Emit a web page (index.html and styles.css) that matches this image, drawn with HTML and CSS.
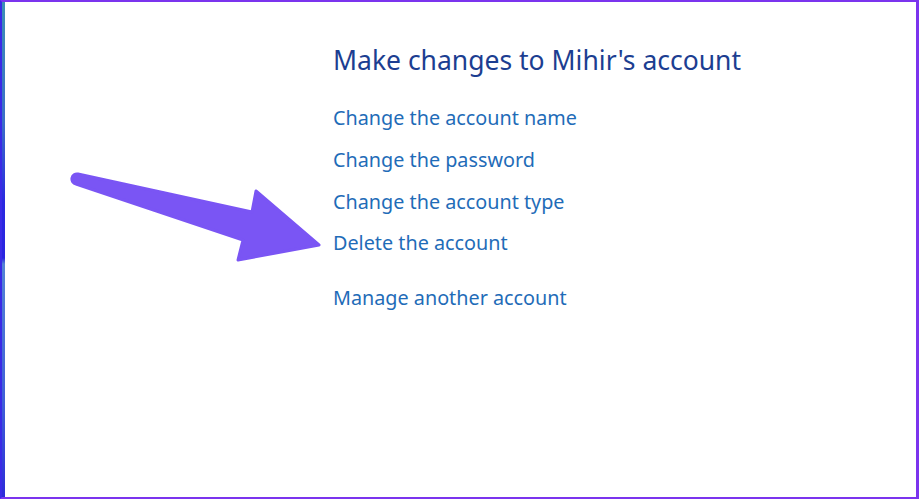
FILE: index.html
```html
<!DOCTYPE html>
<html>
<head>
<meta charset="utf-8">
<link rel="stylesheet" href="styles.css">
</head>
<body>
<div class="frame">
  <div class="strip"></div>
  <div class="content">
    <h1 class="title">Make changes to Mihir's account</h1>
    <ul class="links">
      <li><a class="link">Change the account name</a></li>
      <li><a class="link">Change the password</a></li>
      <li><a class="link">Change the account type</a></li>
      <li><a class="link">Delete the account</a></li>
    </ul>
    <div class="other"><a class="link">Manage another account</a></div>
  </div>
  <svg class="arrow" width="919" height="499" viewBox="0 0 919 499">
    <path d="M78 174 L252 212 L256 191 L319 245 L238 260 L243 240 L76 184 A5 5 0 0 1 78 174 Z" fill="#7a55f4" stroke="#7a55f4" stroke-width="3" stroke-linejoin="round"/>
  </svg>
</div>
</body>
</html>
```
FILE: styles.css
```css
html, body {
  margin: 0;
  padding: 0;
  background: #ffffff;
}
.frame {
  position: relative;
  width: 919px;
  height: 499px;
  box-sizing: border-box;
  border-top: 2px solid #7b34ee;
  border-right: 3px solid #7b34ee;
  border-bottom: 2px solid #7b34ee;
  border-left: 2px solid #3a2ae6;
  display: flex;
  font-family: "Noto Sans", "Open Sans", sans-serif;
}
.strip {
  width: 3px;
  flex: none;
  background: linear-gradient(to bottom, #3b8fb6 0px, #3a6fc8 120px, #2a28e0 200px, #2a24e0 256px, #5384d6 262px, #3f5fd8 400px, #2c2ad8 497px);
}
.content {
  padding: 41px 0 0 328px;
}
.title {
  margin: 0;
  font-size: 26.5px;
  font-weight: 400;
  color: #1c3e91;
  line-height: 34px;
}
.links {
  list-style: none;
  margin: 30px 0 0 0;
  padding: 0;
}
.links li {
  height: 41.8px;
  line-height: 22px;
}
.link {
  font-size: 19.8px;
  color: #1f6cb8;
  text-decoration: none;
}
.other {
  margin-top: 13px;
  line-height: 22px;
}
.arrow {
  position: absolute;
  left: -2px;
  top: -2px;
  pointer-events: none;
}
```
